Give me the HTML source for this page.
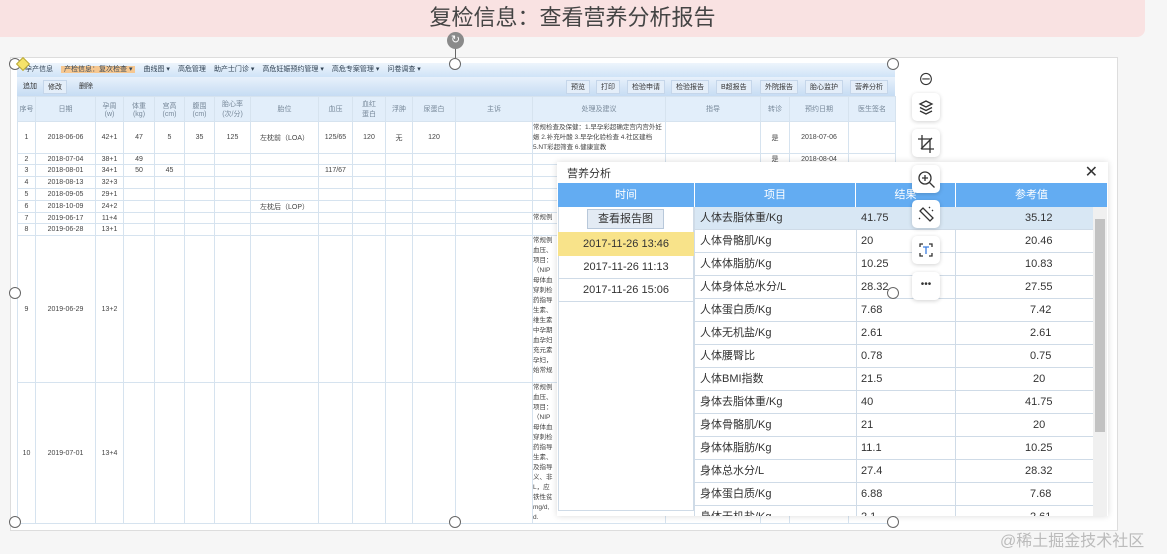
<!DOCTYPE html>
<html><head><meta charset="utf-8"><style>
*{margin:0;padding:0;box-sizing:border-box}
body{width:1167px;height:554px;background:#f6f6f6;font-family:"Liberation Sans","Noto Sans CJK SC",sans-serif;position:relative;overflow:hidden;color:#333}
.abs{position:absolute}
.banner{left:0;top:0;width:1145px;height:37px;background:#f9e2e2;border-radius:0 0 8px 0;text-align:center;font-size:22px;line-height:36px;color:#444}
.frame{left:10px;top:57px;width:1108px;height:474px;background:#fff;border:1px solid #ddd}
.menu{left:17px;top:63px;width:878px;height:14px;background:linear-gradient(#eef5fc,#cfe3f7);font-size:7px;line-height:14px;color:#345;white-space:nowrap}
.menu span{margin-right:8px}
.menu .act{background:#f6c790;padding:0 3px}
.tool{left:17px;top:77px;width:878px;height:19px;background:linear-gradient(#e8f1fb,#c6dcf3);font-size:7px}
.btn{position:absolute;top:3px;height:14px;line-height:14px;padding:0 4px;background:#e4eef9;border:1px solid #c5d6ea;color:#333;font-size:7px}
table.g{position:absolute;left:17px;top:96px;border-collapse:collapse;table-layout:fixed;font-size:7px;color:#444}
table.g td{border:1px solid #d6e3ef;text-align:center;overflow:hidden;vertical-align:middle;padding:0}
table.g tr.h td{background:#e2eefa;color:#789}
.note{text-align:left!important;vertical-align:top!important;font-size:6.5px;line-height:10px}
.dlg{left:557px;top:162px;width:551px;height:354px;background:#fff;box-shadow:0 0 6px rgba(0,0,0,.15)}
.dt{left:10px;top:3px;font-size:11px;color:#333}
.x{right:10px;top:0px;font-size:16px;color:#333}
.hd{top:21px;height:24px;background:#63acf2;color:#fff;font-size:11px;line-height:24px;text-align:center}
.row{position:absolute;left:137px;width:398px;height:23px;border-bottom:1px solid #cfdbe7;font-size:11px;line-height:23px}
.row span{position:absolute;top:0}
.ic{position:absolute;left:912px;width:28px;height:28px;background:#fff;border-radius:5px;box-shadow:0 1px 4px rgba(0,0,0,.18)}
.hdl{position:absolute;width:12px;height:12px;border:1px solid #666;border-radius:50%;background:#fff}
</style></head><body>
<div class="abs banner">复检信息：查看营养分析报告</div>
<div class="abs frame"></div>
<div class="abs menu"><span style="margin-left:8px">孕产信息</span><span class="act">产检信息：复次检查 ▾</span><span>曲线图 ▾</span><span>高危管理</span><span>助产士门诊 ▾</span><span>高危妊娠预约管理 ▾</span><span>高危专案管理 ▾</span><span>问卷调查 ▾</span></div>
<div class="abs tool">
<div class="btn" style="left:2px;background:none;border:none">追加</div><div class="btn" style="left:26px">修改</div><div class="btn" style="left:58px;background:none;border:none">删除</div>
<div class="btn" style="left:549px">预览</div><div class="btn" style="left:579px">打印</div><div class="btn" style="left:610px">检验申请</div><div class="btn" style="left:654px">检验报告</div><div class="btn" style="left:699px">B超报告</div><div class="btn" style="left:743px">外院报告</div><div class="btn" style="left:788px">胎心监护</div><div class="btn" style="left:833px">营养分析</div>
</div>
<table class="g">
<colgroup><col style="width:18px"><col style="width:60px"><col style="width:28px"><col style="width:31px"><col style="width:30px"><col style="width:30px"><col style="width:36px"><col style="width:68px"><col style="width:34px"><col style="width:33px"><col style="width:27px"><col style="width:43px"><col style="width:77px"><col style="width:133px"><col style="width:95px"><col style="width:29px"><col style="width:59px"><col style="width:47px"></colgroup>
<tr class="h" style="height:25px"><td>序号</td><td>日期</td><td>孕周<br>(w)</td><td>体重<br>(kg)</td><td>宫高<br>(cm)</td><td>腹围<br>(cm)</td><td>胎心率<br>(次/分)</td><td>胎位</td><td>血压</td><td>血红<br>蛋白</td><td>浮肿</td><td>尿蛋白</td><td>主诉</td><td>处理及建议</td><td>指导</td><td>转诊</td><td>预约日期</td><td>医生签名</td></tr>
<tr style="height:32px"><td>1</td><td>2018-06-06</td><td>42+1</td><td>47</td><td>5</td><td>35</td><td>125</td><td>左枕前（LOA）</td><td>125/65</td><td>120</td><td>无</td><td>120</td><td></td><td class="note" style="vertical-align:middle!important">常规检查及保健：1.早孕彩超确定宫内宫外妊娠 2.补充叶酸 3.早孕化验检查 4.社区建档 5.NT彩超筛查 6.健康宣教</td><td></td><td>是</td><td>2018-07-06</td><td></td></tr>
<tr style="height:11px"><td>2</td><td>2018-07-04</td><td>38+1</td><td>49</td><td></td><td></td><td></td><td></td><td></td><td></td><td></td><td></td><td></td><td></td><td></td><td>是</td><td>2018-08-04</td><td></td></tr>
<tr style="height:12px"><td>3</td><td>2018-08-01</td><td>34+1</td><td>50</td><td>45</td><td></td><td></td><td></td><td>117/67</td><td></td><td></td><td></td><td></td><td></td><td></td><td></td><td></td><td></td></tr>
<tr style="height:12px"><td>4</td><td>2018-08-13</td><td>32+3</td><td></td><td></td><td></td><td></td><td></td><td></td><td></td><td></td><td></td><td></td><td></td><td></td><td></td><td></td><td></td></tr>
<tr style="height:12px"><td>5</td><td>2018-09-05</td><td>29+1</td><td></td><td></td><td></td><td></td><td></td><td></td><td></td><td></td><td></td><td></td><td></td><td></td><td></td><td></td><td></td></tr>
<tr style="height:12px"><td>6</td><td>2018-10-09</td><td>24+2</td><td></td><td></td><td></td><td></td><td>左枕后（LOP）</td><td></td><td></td><td></td><td></td><td></td><td></td><td></td><td></td><td></td><td></td></tr>
<tr style="height:11px"><td>7</td><td>2019-06-17</td><td>11+4</td><td></td><td></td><td></td><td></td><td></td><td></td><td></td><td></td><td></td><td></td><td class="note">常规例</td><td></td><td></td><td></td><td></td></tr>
<tr style="height:12px"><td>8</td><td>2019-06-28</td><td>13+1</td><td></td><td></td><td></td><td></td><td></td><td></td><td></td><td></td><td></td><td></td><td></td><td></td><td></td><td></td><td></td></tr>
<tr style="height:147px"><td>9</td><td>2019-06-29</td><td>13+2</td><td></td><td></td><td></td><td></td><td></td><td></td><td></td><td></td><td></td><td></td><td class="note">常规例<br>血压、<br>项目：<br>（NIP<br>母体血<br>穿刺检<br>药指导<br>生素、<br>维生素<br>中孕期<br>血孕妇<br>充元素<br>孕妇，<br>始常规</td><td></td><td></td><td></td><td></td></tr>
<tr style="height:140px"><td>10</td><td>2019-07-01</td><td>13+4</td><td></td><td></td><td></td><td></td><td></td><td></td><td></td><td></td><td></td><td></td><td class="note">常规例<br>血压、<br>项目：<br>（NIP<br>母体血<br>穿刺检<br>药指导<br>生素、<br>及指导<br>义、非<br>L，应<br>铁性贫<br>mg/d,<br>d.</td><td></td><td></td><td></td><td></td></tr>
</table>

<div class="abs dlg">
<div class="abs dt">营养分析</div><div class="abs x">✕</div>
<div class="abs hd" style="left:1px;width:136px">时间</div>
<div class="abs hd" style="left:138px;width:160px">项目</div>
<div class="abs hd" style="left:299px;width:99px">结果</div>
<div class="abs hd" style="left:399px;width:151px">参考值</div>
<div class="abs" style="left:1px;top:45px;width:136px;height:304px;border:1px solid #cfdbe7;border-top:none"></div>
<div class="abs" style="left:30px;top:47px;width:77px;height:20px;background:#e3ebf4;border:1px solid #b8c8da;font-size:11px;line-height:19px;text-align:center">查看报告图</div>
<div class="abs" style="left:1px;top:70px;width:136px;height:24px;background:#f8e38a;font-size:11px;line-height:24px;text-align:center">2017-11-26 13:46</div>
<div class="abs" style="left:1px;top:94px;width:136px;height:23px;border-bottom:1px solid #cfdbe7;font-size:11px;line-height:23px;text-align:center">2017-11-26 11:13</div>
<div class="abs" style="left:1px;top:117px;width:136px;height:23px;border-bottom:1px solid #cfdbe7;font-size:11px;line-height:23px;text-align:center">2017-11-26 15:06</div>
<div class="abs" style="left:137px;top:45px;width:399px;height:309px;overflow:hidden;border-left:1px solid #cfdbe7">
<div class="abs" style="left:161px;top:0;width:1px;height:309px;background:#cfdbe7"></div>
<div class="abs" style="left:260px;top:0;width:1px;height:309px;background:#cfdbe7"></div>
<div class="row" style="left:0;top:0;background:#d8e7f4"><span style="left:5px">人体去脂体重/Kg</span><span style="left:166px">41.75</span><span style="left:330px">35.12</span></div>
<div class="row" style="left:0;top:23px"><span style="left:5px">人体骨骼肌/Kg</span><span style="left:166px">20</span><span style="left:330px">20.46</span></div>
<div class="row" style="left:0;top:46px"><span style="left:5px">人体体脂肪/Kg</span><span style="left:166px">10.25</span><span style="left:330px">10.83</span></div>
<div class="row" style="left:0;top:69px"><span style="left:5px">人体身体总水分/L</span><span style="left:166px">28.32</span><span style="left:330px">27.55</span></div>
<div class="row" style="left:0;top:92px"><span style="left:5px">人体蛋白质/Kg</span><span style="left:166px">7.68</span><span style="left:335px">7.42</span></div>
<div class="row" style="left:0;top:115px"><span style="left:5px">人体无机盐/Kg</span><span style="left:166px">2.61</span><span style="left:335px">2.61</span></div>
<div class="row" style="left:0;top:138px"><span style="left:5px">人体腰臀比</span><span style="left:166px">0.78</span><span style="left:335px">0.75</span></div>
<div class="row" style="left:0;top:161px"><span style="left:5px">人体BMI指数</span><span style="left:166px">21.5</span><span style="left:338px">20</span></div>
<div class="row" style="left:0;top:184px"><span style="left:5px">身体去脂体重/Kg</span><span style="left:166px">40</span><span style="left:330px">41.75</span></div>
<div class="row" style="left:0;top:207px"><span style="left:5px">身体骨骼肌/Kg</span><span style="left:166px">21</span><span style="left:338px">20</span></div>
<div class="row" style="left:0;top:230px"><span style="left:5px">身体体脂肪/Kg</span><span style="left:166px">11.1</span><span style="left:330px">10.25</span></div>
<div class="row" style="left:0;top:253px"><span style="left:5px">身体总水分/L</span><span style="left:166px">27.4</span><span style="left:330px">28.32</span></div>
<div class="row" style="left:0;top:276px"><span style="left:5px">身体蛋白质/Kg</span><span style="left:166px">6.88</span><span style="left:335px">7.68</span></div>
<div class="row" style="left:0;top:299px"><span style="left:5px">身体无机盐/Kg</span><span style="left:166px">2.1</span><span style="left:335px">2.61</span></div>
</div>
<div class="abs" style="left:536px;top:45px;width:14px;height:309px;background:#f0f0f0"></div>
<div class="abs" style="left:538px;top:57px;width:10px;height:213px;background:#c2c2c2"></div>
</div>

<div class="abs" style="left:912px;top:66px;width:28px;height:22px;font-size:16px;text-align:center;color:#333">⊖</div>
<div class="ic" style="top:93px"><svg width="28" height="28"><g fill="none" stroke="#333" stroke-width="1.3"><path d="M8 11l6-3 6 3-6 3z"/><path d="M8 14.5l6 3 6-3"/><path d="M8 18l6 3 6-3"/></g></svg></div>
<div class="ic" style="top:129px"><svg width="28" height="28"><g fill="none" stroke="#333" stroke-width="1.3"><path d="M10 6v14h12"/><path d="M6 10h12v14"/><path d="M9 20l11-11"/></g></svg></div>
<div class="ic" style="top:165px"><svg width="28" height="28"><g fill="none" stroke="#333" stroke-width="1.3"><circle cx="13" cy="13" r="6"/><path d="M17.5 17.5l5 5M13 10v6M10 13h6"/></g></svg></div>
<div class="ic" style="top:200px"><svg width="28" height="28"><g fill="none" stroke="#333" stroke-width="1.3"><path d="M8 11l3-3 10 10-3 3z"/><path d="M17 7l1 1M20 10l1 1M7 18l1 1"/></g></svg></div>
<div class="ic" style="top:236px"><svg width="28" height="28"><g fill="none" stroke="#333" stroke-width="1.3"><path d="M8 11V8h3M17 8h3v3M20 17v3h-3M11 20H8v-3"/><path d="M11 11h6M14 11v7" stroke="#3b7de0"/></g></svg></div>
<div class="ic" style="top:272px;font-size:10px;text-align:center;line-height:26px">•••</div>

<div class="hdl" style="left:9px;top:58px"></div>
<div class="abs" style="left:18px;top:59px;width:10px;height:10px;background:#f5e36a;border:1px solid #b9a93a;transform:rotate(45deg)"></div>
<div class="abs" style="left:455px;top:46px;width:1px;height:12px;background:#666"></div>
<div class="abs" style="left:447px;top:32px;width:17px;height:17px;border-radius:50%;background:#8a8a8a;color:#fff;font-size:11px;text-align:center;line-height:17px">↻</div>
<div class="hdl" style="left:449px;top:58px"></div>
<div class="hdl" style="left:887px;top:58px"></div>
<div class="hdl" style="left:9px;top:287px"></div>
<div class="hdl" style="left:887px;top:287px"></div>
<div class="hdl" style="left:9px;top:516px"></div>
<div class="hdl" style="left:449px;top:516px"></div>
<div class="hdl" style="left:887px;top:516px"></div>
<div class="abs" style="left:1000px;top:527px;font-size:16px;color:#bbb">@稀土掘金技术社区</div>
</body></html>
